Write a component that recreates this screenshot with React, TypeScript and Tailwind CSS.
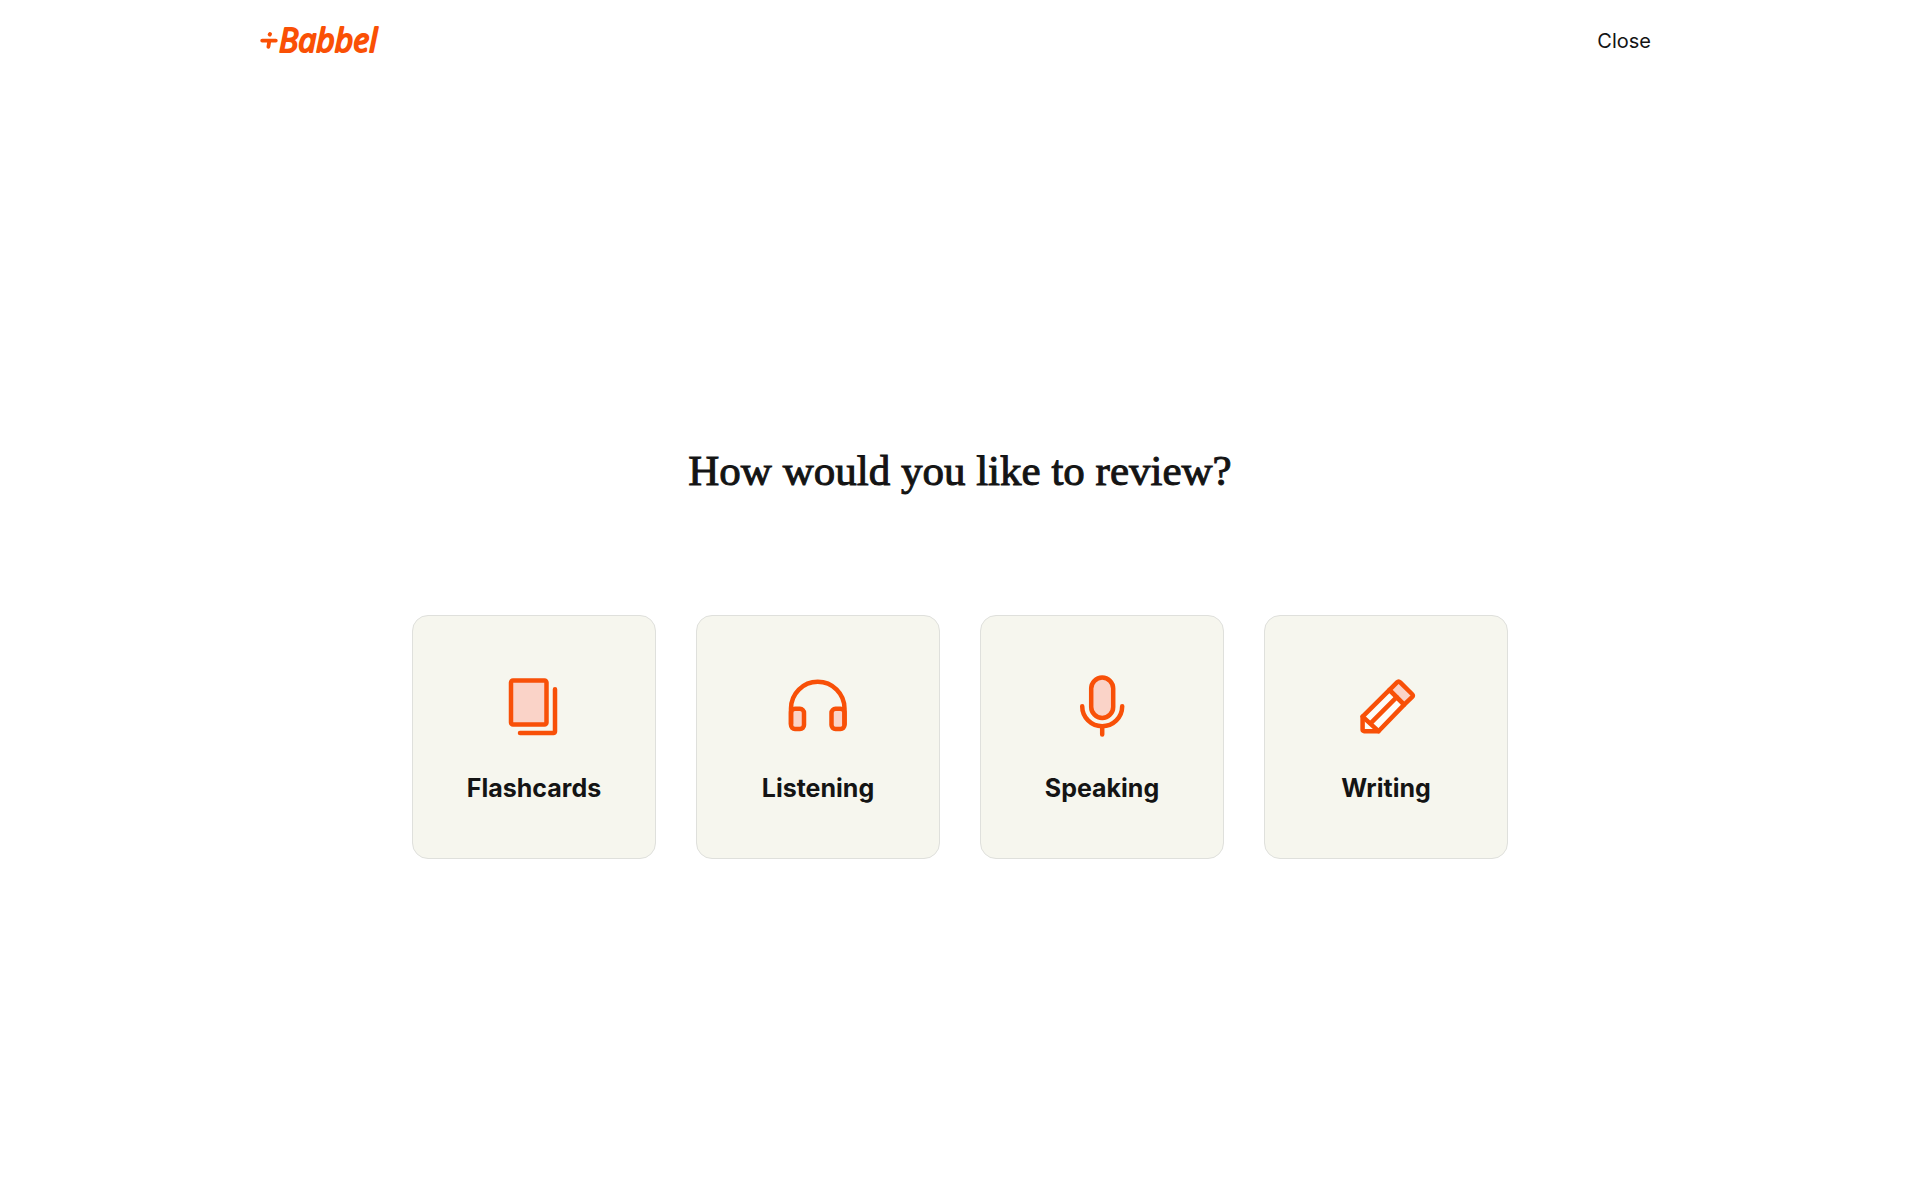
import type { ReactNode } from "react";

function Icon({ children }: { children: ReactNode }) {
  return (
    <svg
      viewBox="0 0 64 64"
      className="size-16"
      fill="none"
      stroke="#f85008"
      strokeWidth="4.5"
      strokeLinecap="round"
      strokeLinejoin="round"
      aria-hidden="true"
    >
      {children}
    </svg>
  );
}

const activities = [
  {
    name: "Flashcards",
    icon: (
      <Icon>
        <rect x="9" y="6.5" width="35.5" height="44" rx="2" fill="#fad3c8" />
        <path d="M53 15.3V57.5a1.5 1.5 0 0 1-1.5 1.5H18" />
      </Icon>
    ),
  },
  {
    name: "Listening",
    icon: (
      <Icon>
        <rect x="5" y="34.8" width="13" height="20.2" rx="4" fill="#fad3c8" />
        <rect x="45.5" y="34.8" width="13" height="20.2" rx="4" fill="#fad3c8" />
        <path d="M5 50V34.5a26.75 26.75 0 0 1 53.5 0V50" />
      </Icon>
    ),
  },
  {
    name: "Speaking",
    icon: (
      <Icon>
        <rect x="21.2" y="3.6" width="22" height="40.3" rx="11" fill="#fad3c8" />
        <path d="M12.2 32.2a20 20 0 0 0 40 0M32.2 52.2V60.5" />
      </Icon>
    ),
  },
  {
    name: "Writing",
    icon: (
      <Icon>
        <path d="M8.6 42.6 35.5 15.9 50.2 30.6 24.5 57.2H10.1A1.5 1.5 0 0 1 8.6 55.7Z" fill="#fdfdf8" />
        <path d="M35.5 15.9 43 8.4q1.6-1.6 3.2 0L58 20q1.6 1.6 0 3.2L50.2 30.6Z" fill="#fad3c8" />
        <path d="M8.6 42.6 24.5 57.2M16.3 49.6 42.7 23.2" />
      </Icon>
    ),
  },
];

function Logo() {
  return (
    <svg viewBox="0 0 128 56" className="h-14 w-32" fill="#fa5005" stroke="#fa5005" role="img" aria-label="Babbel">
      <path d="M2.2 27.6H15.8M9.4 27.6 8.4 33.8" fill="none" strokeWidth="3.8" strokeLinecap="round" />
      <path d="M10 21.1 9.7 21.5" fill="none" strokeWidth="4" strokeLinecap="round" />
      <text
        x="19"
        y="39"
        fontFamily="'Open Sans', sans-serif"
        fontSize="32"
        fontWeight="400"
        fontStyle="italic"
        strokeWidth="2"
        strokeLinejoin="round"
      >
        Babbel
      </text>
    </svg>
  );
}

export default function App() {
  return (
    <div className="flex min-h-screen flex-col bg-white font-['Inter',sans-serif] text-[#141414]">
      <header className="mx-auto flex h-[82px] w-full max-w-[1400px] items-center justify-between">
        <a href="#home">
          <Logo />
        </a>
        <button type="button" className="px-[9px] text-xl">
          Close
        </button>
      </header>
      <main className="flex flex-1 flex-col items-center justify-center px-6 pt-5">
        <h1 className="mb-[116px] text-center font-['Liberation_Serif',serif] text-[43px] leading-14 [-webkit-text-stroke:1px_#141414]">
          How would you like to review?
        </h1>
        <div className="flex flex-wrap justify-center gap-10">
          {activities.map(({ name, icon }) => (
            <button
              key={name}
              type="button"
              className="flex size-61 flex-col items-center justify-center gap-8 rounded-2xl border border-[#dfe0dc] bg-[#f6f6ee] pt-1.5 text-[25px] leading-9 font-bold"
            >
              {icon}
              {name}
            </button>
          ))}
        </div>
      </main>
    </div>
  );
}
